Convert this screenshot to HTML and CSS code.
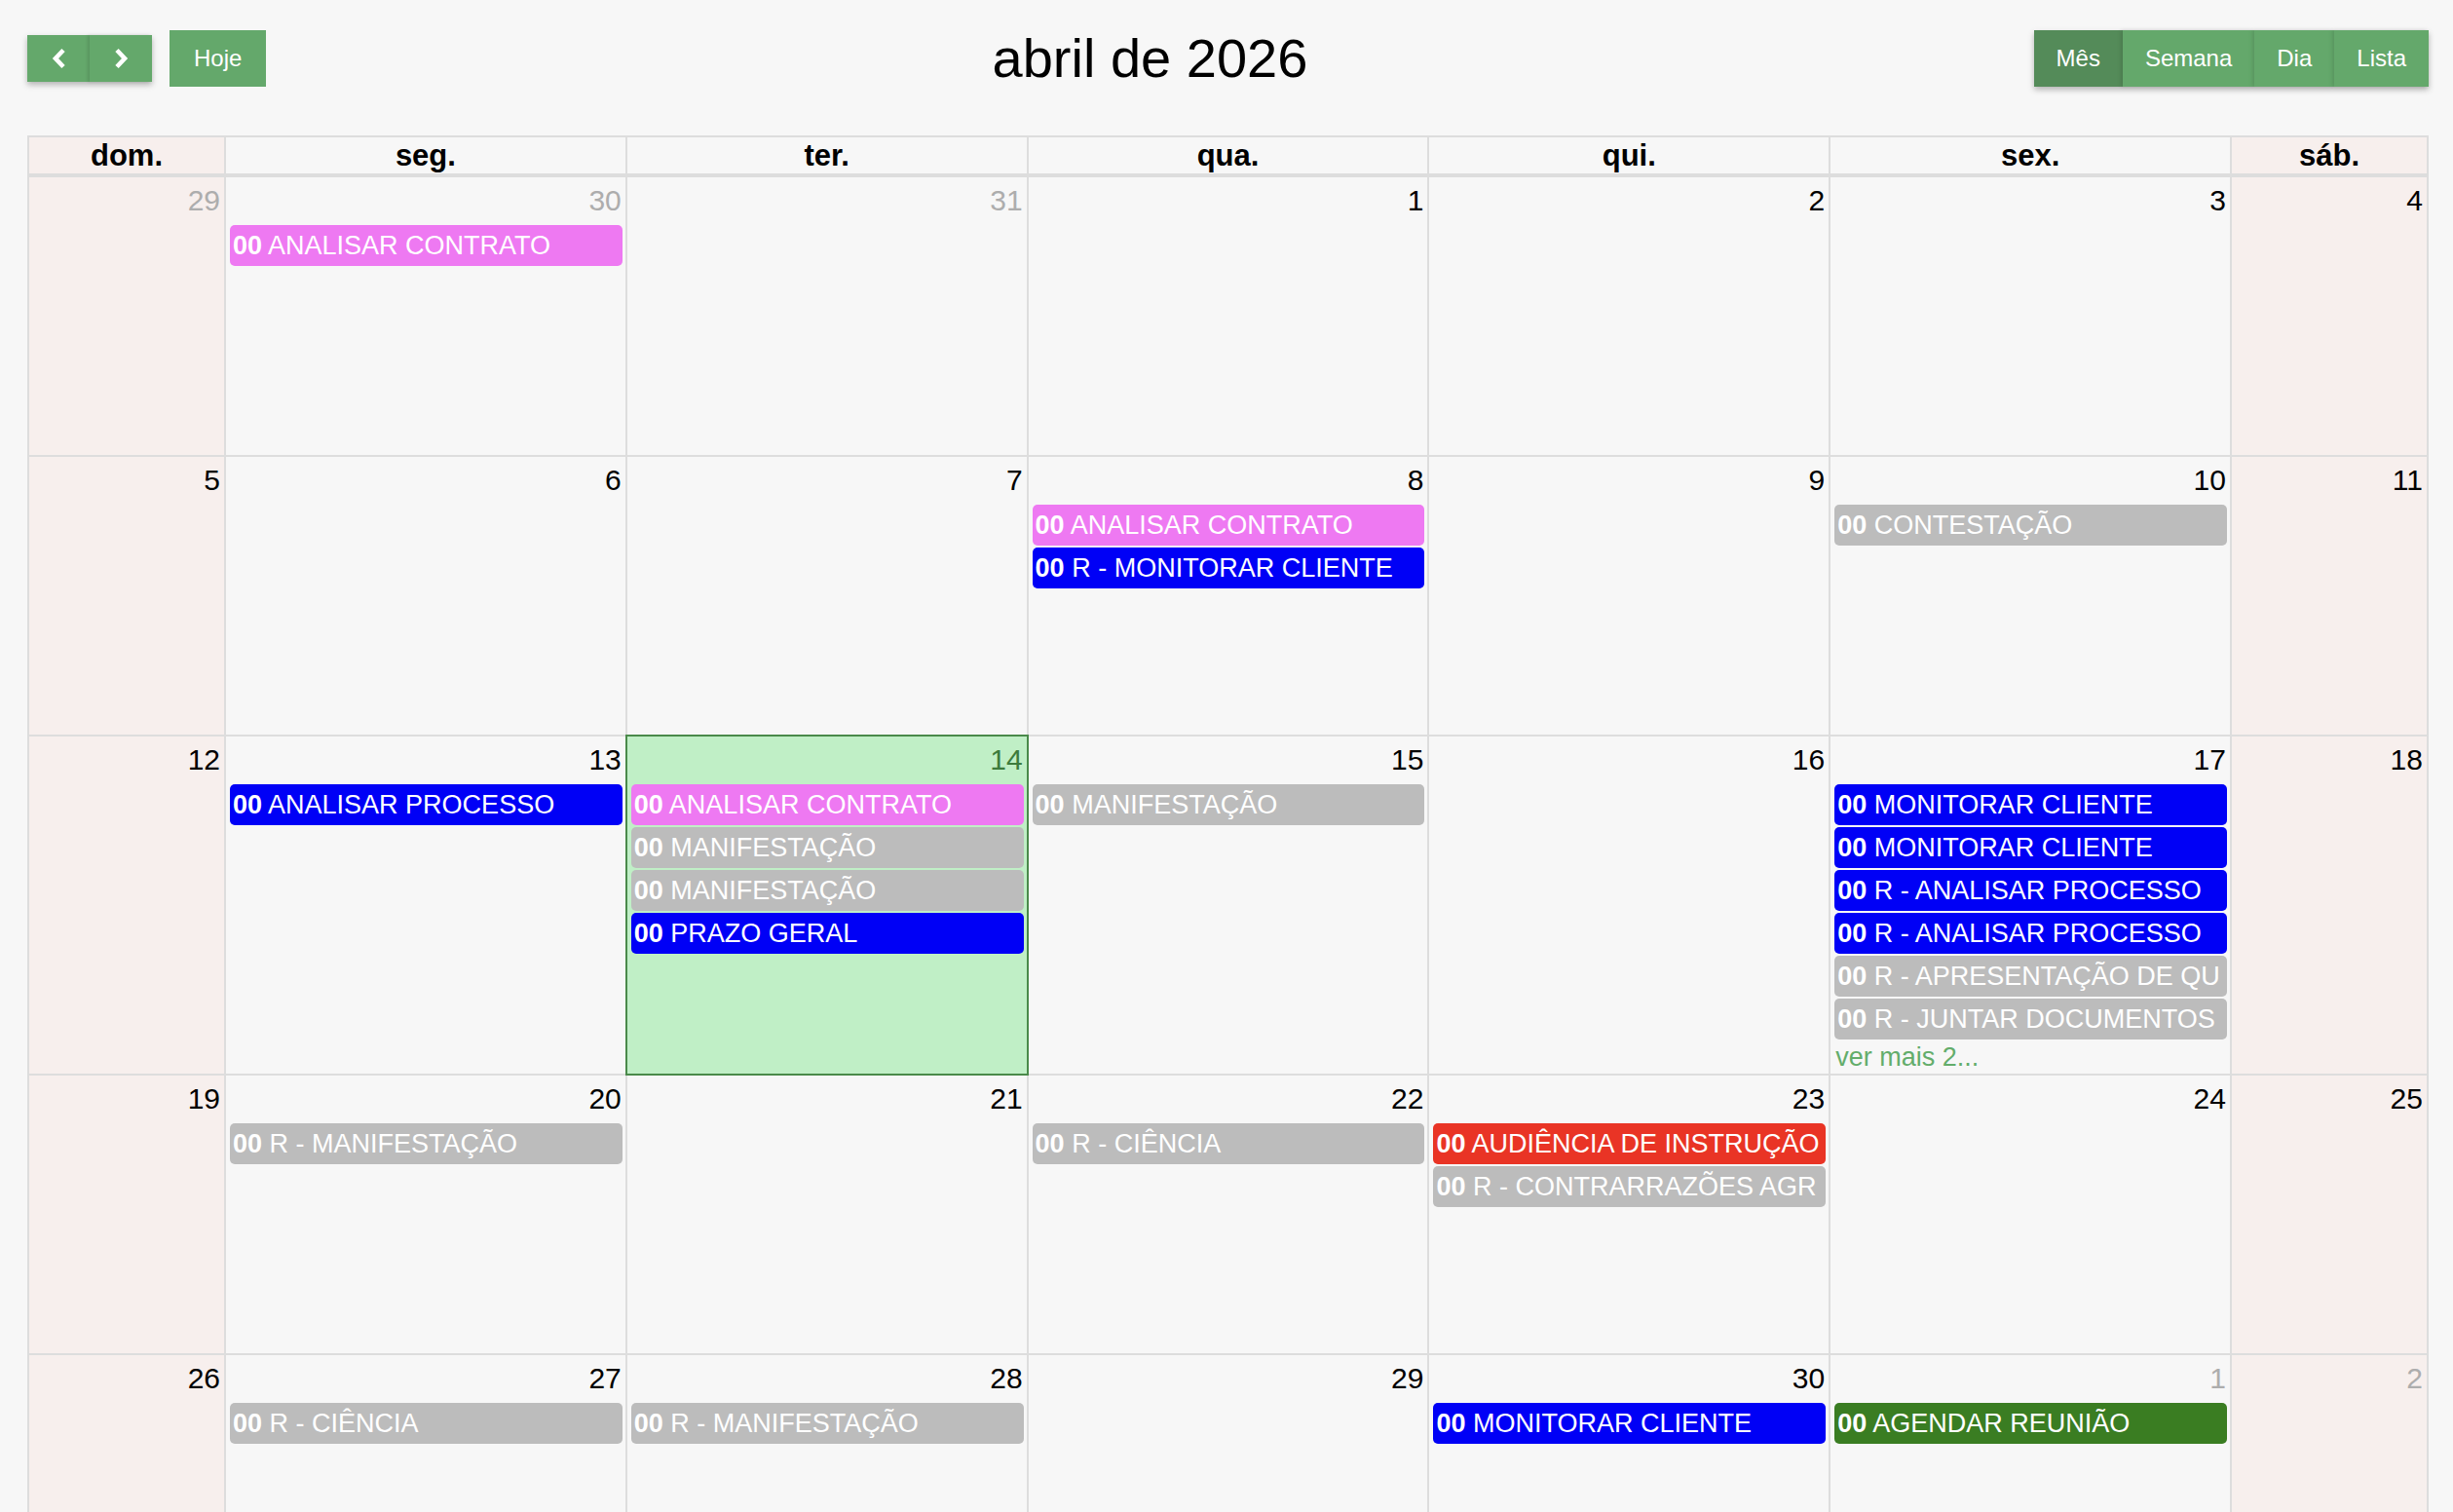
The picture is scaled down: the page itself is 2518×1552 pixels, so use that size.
FILE: index.html
```html
<!DOCTYPE html>
<html lang="pt-BR">
<head>
<meta charset="utf-8">
<title>Agenda</title>
<link rel="stylesheet" href="styles.css">
</head>
<body>
<div class="cal">
  <div class="toolbar">
    <div class="tb-left">
      <div class="btn-group shadow">
        <button class="btn nav-btn" aria-label="anterior"><svg width="15" height="22" viewBox="0 0 15 22"><polyline points="12,2.5 4,11 12,19.5" fill="none" stroke="#fff" stroke-width="4.6"/></svg></button>
        <button class="btn nav-btn" aria-label="próximo"><svg width="15" height="22" viewBox="0 0 15 22"><polyline points="3,2.5 11,11 3,19.5" fill="none" stroke="#fff" stroke-width="4.6"/></svg></button>
      </div>
      <button class="btn today-btn">Hoje</button>
    </div>
    <h2 class="title">abril de 2026</h2>
    <div class="tb-right">
      <div class="btn-group shadow">
        <button class="btn view-btn active">Mês</button>
        <button class="btn view-btn">Semana</button>
        <button class="btn view-btn">Dia</button>
        <button class="btn view-btn">Lista</button>
      </div>
    </div>
  </div>

  <div class="month">
    <div class="row head">
      <div class="hcell weekend">dom.</div>
      <div class="hcell">seg.</div>
      <div class="hcell">ter.</div>
      <div class="hcell">qua.</div>
      <div class="hcell">qui.</div>
      <div class="hcell">sex.</div>
      <div class="hcell weekend">sáb.</div>
    </div>

    <div class="row week">
      <div class="cell weekend"><div class="num other">29</div></div>
      <div class="cell"><div class="num other">30</div>
        <div class="ev violet"><b>00</b> ANALISAR CONTRATO</div>
      </div>
      <div class="cell"><div class="num other">31</div></div>
      <div class="cell"><div class="num">1</div></div>
      <div class="cell"><div class="num">2</div></div>
      <div class="cell"><div class="num">3</div></div>
      <div class="cell weekend"><div class="num">4</div></div>
    </div>

    <div class="row week">
      <div class="cell weekend"><div class="num">5</div></div>
      <div class="cell"><div class="num">6</div></div>
      <div class="cell"><div class="num">7</div></div>
      <div class="cell"><div class="num">8</div>
        <div class="ev violet"><b>00</b> ANALISAR CONTRATO</div>
        <div class="ev blue"><b>00</b> R - MONITORAR CLIENTE</div>
      </div>
      <div class="cell"><div class="num">9</div></div>
      <div class="cell"><div class="num">10</div>
        <div class="ev grey"><b>00</b> CONTESTAÇÃO</div>
      </div>
      <div class="cell weekend"><div class="num">11</div></div>
    </div>

    <div class="row week">
      <div class="cell weekend"><div class="num">12</div></div>
      <div class="cell"><div class="num">13</div>
        <div class="ev blue"><b>00</b> ANALISAR PROCESSO</div>
      </div>
      <div class="cell today"><div class="num">14</div>
        <div class="ev violet"><b>00</b> ANALISAR CONTRATO</div>
        <div class="ev grey"><b>00</b> MANIFESTAÇÃO</div>
        <div class="ev grey"><b>00</b> MANIFESTAÇÃO</div>
        <div class="ev blue"><b>00</b> PRAZO GERAL</div>
      </div>
      <div class="cell"><div class="num">15</div>
        <div class="ev grey"><b>00</b> MANIFESTAÇÃO</div>
      </div>
      <div class="cell"><div class="num">16</div></div>
      <div class="cell"><div class="num">17</div>
        <div class="ev blue"><b>00</b> MONITORAR CLIENTE</div>
        <div class="ev blue"><b>00</b> MONITORAR CLIENTE</div>
        <div class="ev blue"><b>00</b> R - ANALISAR PROCESSO</div>
        <div class="ev blue"><b>00</b> R - ANALISAR PROCESSO</div>
        <div class="ev grey"><b>00</b> R - APRESENTAÇÃO DE QU</div>
        <div class="ev grey"><b>00</b> R - JUNTAR DOCUMENTOS</div>
        <a class="more" href="#">ver mais 2...</a>
      </div>
      <div class="cell weekend"><div class="num">18</div></div>
    </div>

    <div class="row week">
      <div class="cell weekend"><div class="num">19</div></div>
      <div class="cell"><div class="num">20</div>
        <div class="ev grey"><b>00</b> R - MANIFESTAÇÃO</div>
      </div>
      <div class="cell"><div class="num">21</div></div>
      <div class="cell"><div class="num">22</div>
        <div class="ev grey"><b>00</b> R - CIÊNCIA</div>
      </div>
      <div class="cell"><div class="num">23</div>
        <div class="ev red"><b>00</b> AUDIÊNCIA DE INSTRUÇÃO</div>
        <div class="ev grey"><b>00</b> R - CONTRARRAZÕES AGR</div>
      </div>
      <div class="cell"><div class="num">24</div></div>
      <div class="cell weekend"><div class="num">25</div></div>
    </div>

    <div class="row week">
      <div class="cell weekend"><div class="num">26</div></div>
      <div class="cell"><div class="num">27</div>
        <div class="ev grey"><b>00</b> R - CIÊNCIA</div>
      </div>
      <div class="cell"><div class="num">28</div>
        <div class="ev grey"><b>00</b> R - MANIFESTAÇÃO</div>
      </div>
      <div class="cell"><div class="num">29</div></div>
      <div class="cell"><div class="num">30</div>
        <div class="ev blue"><b>00</b> MONITORAR CLIENTE</div>
      </div>
      <div class="cell"><div class="num other">1</div>
        <div class="ev green"><b>00</b> AGENDAR REUNIÃO</div>
      </div>
      <div class="cell weekend"><div class="num other">2</div></div>
    </div>
  </div>
</div>
</body>
</html>
```

FILE: styles.css
```css
* { box-sizing: border-box; }

html, body {
  margin: 0;
  padding: 0;
  background: #f7f7f7;
}

body {
  font-family: "Liberation Sans", Arial, Helvetica, sans-serif;
  color: #000;
}

.cal {
  padding: 0 25px 0 28px;
}

/* ---------- toolbar ---------- */
.toolbar {
  display: flex;
  align-items: center;
  justify-content: space-between;
  height: 58px;
  margin-top: 31px;
  margin-bottom: 50px;
}

.tb-left {
  display: flex;
  align-items: center;
  gap: 18px;
}

.tb-right {
  display: flex;
  align-items: center;
}

.btn-group {
  display: flex;
}

.shadow {
  box-shadow: 0 3px 6px rgba(0, 0, 0, 0.28);
}

.btn {
  font-family: inherit;
  border: 0;
  margin: 0;
  background: #64a86b;
  color: #fff;
  font-size: 24px;
  cursor: pointer;
  display: flex;
  align-items: center;
  justify-content: center;
}

.nav-btn {
  height: 48px;
  width: 64px;
  padding: 0;
}

.nav-btn + .nav-btn {
  box-shadow: -2px 0 3px rgba(0, 0, 0, 0.12);
}

.today-btn {
  height: 58px;
  padding: 0 25px;
}

.view-btn {
  height: 58px;
  padding: 0 23px;
  position: relative;
}

.view-btn + .view-btn {
  box-shadow: -2px 0 4px rgba(0, 0, 0, 0.12);
}

.view-btn.active {
  background: #548b59;
}

.title {
  margin: 0;
  font-size: 56px;
  font-weight: normal;
  line-height: 58px;
}

/* ---------- month grid ---------- */
.month {
  border-left: 2px solid #ddd;
  border-top: 2px solid #ddd;
}

.row {
  display: grid;
  grid-template-columns: 202px repeat(5, minmax(0, 1fr)) 202px;
}

.hcell {
  height: 41px;
  line-height: 37px;
  border-right: 2px solid #ddd;
  border-bottom: 4px solid #ddd;
  text-align: center;
  font-weight: bold;
  font-size: 31px;
}

.weekend {
  background: #f7efed;
}

.cell {
  min-height: 287px;
  border-right: 2px solid #ddd;
  border-bottom: 2px solid #ddd;
  min-width: 0;
  display: flex;
  flex-direction: column;
}

.num {
  font-size: 30px;
  line-height: 33px;
  text-align: right;
  padding: 7px 4px 9px 0;
}

.num.other {
  color: #adadad;
}

.today {
  background: #c0efc6;
  position: relative;
}

.today::after {
  content: "";
  position: absolute;
  top: -2px;
  left: -2px;
  right: -2px;
  bottom: -2px;
  border: 2px solid #4a8a4a;
  pointer-events: none;
}

.today .num {
  color: #3d7b3d;
}

.ev {
  height: 42px;
  line-height: 34px;
  padding: 4px 3px;
  margin: 0 3px 2px 4px;
  border-radius: 5px;
  color: #fff;
  font-size: 27px;
  white-space: nowrap;
  overflow: hidden;
}

.ev b {
  font-weight: bold;
}

.violet { background: #ee79f2; }
.blue   { background: #0000f6; }
.grey   { background: #bcbcbc; }
.red    { background: #e93425; }
.green  { background: #3a7d22; }

.more {
  display: block;
  margin-left: 5px;
  font-size: 27px;
  line-height: 33px;
  color: #63ad6b;
  text-decoration: none;
}
```
